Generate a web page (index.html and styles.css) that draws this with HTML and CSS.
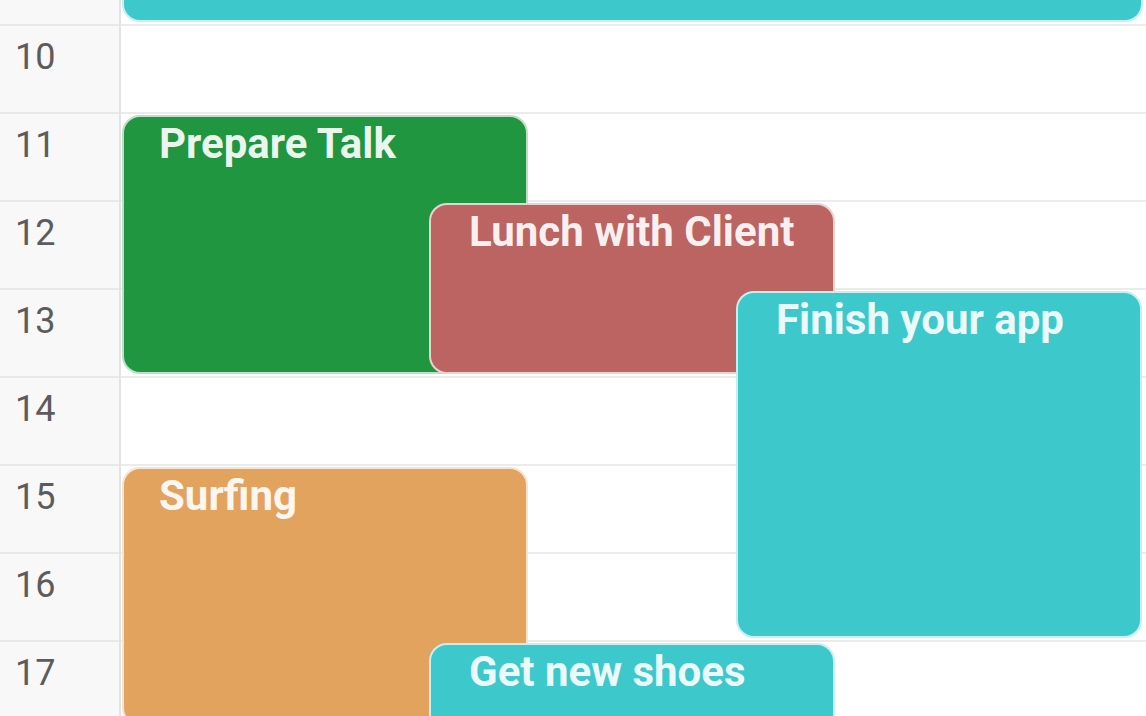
FILE: index.html
```html
<!DOCTYPE html>
<html lang="en">
<head>
<meta charset="utf-8">
<title>Day view</title>
<link rel="stylesheet" href="styles.css">
</head>
<body>
<div class="calendar">
  <div class="hours">
    <div class="hour"></div>
    <div class="hour"><span>10</span></div>
    <div class="hour"><span>11</span></div>
    <div class="hour"><span>12</span></div>
    <div class="hour"><span>13</span></div>
    <div class="hour"><span>14</span></div>
    <div class="hour"><span>15</span></div>
    <div class="hour"><span>16</span></div>
    <div class="hour"><span>17</span></div>
  </div>
  <div class="day">
    <div class="slot"></div>
    <div class="slot"></div>
    <div class="slot"></div>
    <div class="slot"></div>
    <div class="slot"></div>
    <div class="slot"></div>
    <div class="slot"></div>
    <div class="slot"></div>
    <div class="slot"></div>

    <div class="event teal wide" style="--start:-2; --dur:3; --col:0"></div>
    <div class="event green" style="--start:2; --dur:3; --col:0"><span class="title">Prepare Talk</span></div>
    <div class="event red shifted" style="--start:3; --dur:2; --col:1"><span class="title">Lunch with Client</span></div>
    <div class="event teal shifted" style="--start:4; --dur:4; --col:2"><span class="title">Finish your app</span></div>
    <div class="event orange" style="--start:6; --dur:3; --col:0"><span class="title">Surfing</span></div>
    <div class="event teal shifted" style="--start:8; --dur:2; --col:1"><span class="title">Get new shoes</span></div>
  </div>
</div>
</body>
</html>
```

FILE: styles.css
```css
html, body {
  margin: 0;
  padding: 0;
  width: 1146px;
  height: 716px;
  overflow: hidden;
  background: #ffffff;
  font-family: Roboto, "Noto Sans", "Liberation Sans", sans-serif;
}

.calendar {
  display: flex;
  margin-top: -62px;
  width: 1146px;
}

.hours {
  width: 119px;
  flex: none;
  background: #f8f8f8;
  border-right: 2px solid #e3e3e3;
}

.hour {
  box-sizing: border-box;
  height: 88px;
  border-bottom: 2px solid #e8e8e8;
  padding: 13px 0 0 15px;
  font-size: 36px;
  line-height: 1;
  color: #5c5c5c;
}

.day {
  position: relative;
  flex: 1;
}

.slot {
  box-sizing: border-box;
  height: 88px;
  border-bottom: 2px solid #ebebeb;
}

.event {
  position: absolute;
  box-sizing: border-box;
  top: calc(var(--start) * 88px + 1px);
  height: calc(var(--dur) * 88px - 5px);
  left: calc(var(--col) * 307px + 1px);
  width: 406px;
  border: 2px solid rgba(255, 255, 255, 0.7);
  border-radius: 18px;
  padding: 6px 0 0 35px;
  overflow: hidden;
}

.event.shifted {
  padding-left: 38px;
}

.event.wide {
  left: 1px;
  width: 1021px;
}

.title {
  display: block;
  font-size: 42px;
  font-weight: 700;
  line-height: 1;
  color: rgba(255, 255, 255, 0.92);
  white-space: nowrap;
}

.green { background: #219641; }
.red { background: #bc6462; }
.teal { background: #3dc9cb; }
.orange { background: #e2a35f; }
```
